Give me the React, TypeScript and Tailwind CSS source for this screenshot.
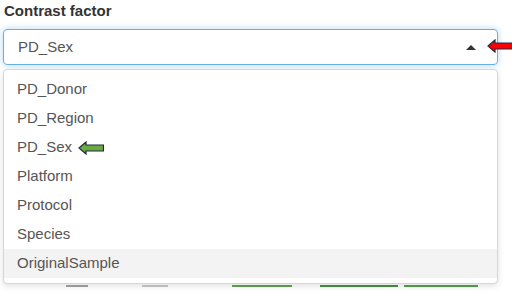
import React from 'react';

const options = ['PD_Donor', 'PD_Region', 'PD_Sex', 'Platform', 'Protocol', 'Species', 'OriginalSample'];

const LeftArrow: React.FC<{ fill: string; className: string }> = ({ fill, className }) => (
    <svg className={className} viewBox="0 0 26 14" width="26" height="14">
        <path d="M1 7 L8 1 L8 4 L25.5 4 L25.5 10 L8 10 L8 13 Z" fill={fill} stroke="#1f2a44" strokeWidth="1.2" strokeLinejoin="miter" />
    </svg>
);

const App: React.FC = () => {
    return (
        <div className="relative w-[512px] h-[293px] bg-white overflow-hidden font-['Liberation_Sans',Arial,sans-serif]">
            <div className="pl-[4px] pt-[2px] w-[498px]">
                <div className="text-[15px] font-bold text-[#333] leading-[18px]">Contrast factor</div>
                <div className="mt-[9px] ml-[-1px] h-[36px] border border-[#66afe9] rounded-[4px] shadow-[0_0_6px_rgba(102,175,233,0.5)] flex items-center pl-[14px] pr-[21px] text-[15px] text-[#555]">
                    <span className="flex-1">PD_Sex</span>
                    <span className="w-0 h-0 border-l-[5px] border-r-[5px] border-b-[5px] border-l-transparent border-r-transparent border-b-[#333]" />
                </div>
                <div className="mt-[4px] ml-[-1px] border border-[#d6d6d6] rounded-[4px] shadow-[0_2px_6px_rgba(0,0,0,0.12)] py-[5px] bg-white">
                    {options.map((o) => (
                        <div
                            key={o}
                            className={`h-[29px] flex items-center pl-[13px] text-[15px] text-[#555] ${o === 'OriginalSample' ? 'bg-[#f3f3f3] text-[#333]' : ''}`}
                        >
                            {o}
                            {o === 'PD_Sex' && <LeftArrow fill="#6aaa3f" className="ml-[6px]" />}
                        </div>
                    ))}
                </div>
                <div className="flex h-[2px] mt-[1px]">
                    <div className="ml-[62px] w-[22px] bg-[#999]" />
                    <div className="ml-[54px] w-[26px] bg-[#bbb]" />
                    <div className="ml-[64px] w-[60px] bg-[#5a9a4a]" />
                    <div className="ml-[28px] w-[78px] bg-[#3f8a3a]" />
                    <div className="ml-[6px] w-[74px] bg-[#4a9a44]" />
                </div>
            </div>
            <LeftArrow fill="#ff0000" className="absolute left-[487px] top-[39px]" />
        </div>
    );
};

export default App;
